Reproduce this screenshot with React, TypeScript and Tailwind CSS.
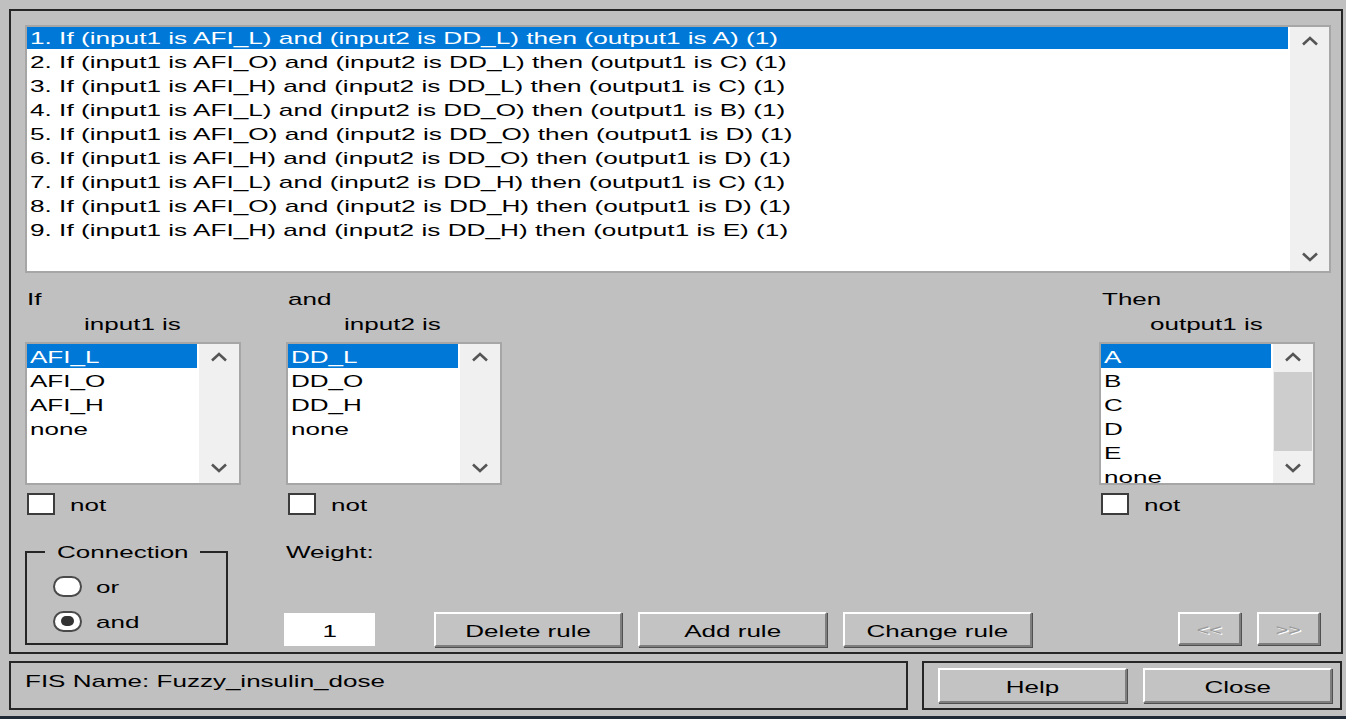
import React from 'react';

const rules = [
  '1. If (input1 is AFI_L) and (input2 is DD_L) then (output1 is A) (1)',
  '2. If (input1 is AFI_O) and (input2 is DD_L) then (output1 is C) (1)',
  '3. If (input1 is AFI_H) and (input2 is DD_L) then (output1 is C) (1)',
  '4. If (input1 is AFI_L) and (input2 is DD_O) then (output1 is B) (1)',
  '5. If (input1 is AFI_O) and (input2 is DD_O) then (output1 is D) (1)',
  '6. If (input1 is AFI_H) and (input2 is DD_O) then (output1 is D) (1)',
  '7. If (input1 is AFI_L) and (input2 is DD_H) then (output1 is C) (1)',
  '8. If (input1 is AFI_O) and (input2 is DD_H) then (output1 is D) (1)',
  '9. If (input1 is AFI_H) and (input2 is DD_H) then (output1 is E) (1)',
];

// wide UI text: the dialog renders its labels stretched horizontally
function T({ children, center = false }: { children: React.ReactNode; center?: boolean }) {
  return (
    <span
      className={
        center
          ? 'inline-block whitespace-nowrap origin-center scale-x-[1.53] translate-y-[2px]'
          : 'inline-block whitespace-nowrap origin-left scale-x-[1.53] translate-y-[2px]'
      }
    >
      {children}
    </span>
  );
}

function Chevron({ up = false }: { up?: boolean }) {
  return (
    <svg width="18" height="10" viewBox="0 0 18 10">
      <path
        d={up ? 'M2 8.5 L9 2 L16 8.5' : 'M2 1.5 L9 8 L16 1.5'}
        fill="none"
        stroke="#555"
        strokeWidth="2.6"
      />
    </svg>
  );
}

function ListBox({ items, thumb = false }: { items: string[]; thumb?: boolean }) {
  return (
    <div className="w-[216px] h-[143px] border-2 border-[#a6a6a6] bg-white flex">
      <div className="w-[170px] overflow-hidden">
        {items.map((it, i) => (
          <div
            key={it}
            className={
              i === 0
                ? 'h-[24px] leading-[24px] pl-[3px] bg-[#0078d7] text-white'
                : 'h-[24px] leading-[24px] pl-[3px]'
            }
          >
            <T>{it}</T>
          </div>
        ))}
      </div>
      <div className="ml-[2px] w-[40px] bg-[#f0f0f0] flex flex-col">
        <div className="h-[26px] flex items-center justify-center">
          <Chevron up />
        </div>
        {thumb && <div className="mt-[2px] mx-[1px] h-[79px] bg-[#cdcdcd]" />}
        <div className="flex-1" />
        <div className="h-[30px] flex items-center justify-center">
          <Chevron />
        </div>
      </div>
    </div>
  );
}

function NotBox() {
  return (
    <div className="mt-[8px] pl-[2px] flex items-center h-[22px]">
      <div className="w-[28px] h-[22px] bg-white border-2 border-[#3c3c3c]" />
      <div className="ml-[15px]">
        <T>not</T>
      </div>
    </div>
  );
}

function Radio({ checked = false, label }: { checked?: boolean; label: string }) {
  return (
    <div className="h-[24px] flex items-center pl-[26px]">
      <div className="w-[29px] h-[21px] rounded-full bg-white border-2 border-[#4a4a4a] flex items-center justify-center">
        {checked && <div className="w-[13px] h-[10px] rounded-full bg-[#333]" />}
      </div>
      <div className="ml-[14px]">
        <T>{label}</T>
      </div>
    </div>
  );
}

function Btn({ label, size, disabled = false }: { label: string; size: string; disabled?: boolean }) {
  return (
    <div
      className={
        size +
        ' border-2 border-t-white border-l-white border-r-[#7e7e7e] border-b-[#7e7e7e] shadow-[1px_1px_0_#505050] bg-[#c3c3c3] flex items-center justify-center'
      }
    >
      {disabled ? (
        <span className="text-[14px] text-[#9a9a9a] [text-shadow:1px_1px_0_#fff]">
          <T center>{label}</T>
        </span>
      ) : (
        <T center>{label}</T>
      )}
    </div>
  );
}

export default function App() {
  return (
    <div className="w-[1346px] h-[719px] overflow-hidden bg-[#c0c0c0] text-[17px] text-black font-['Liberation_Sans',Arial,sans-serif] flex flex-col">
      <div className="pt-[9px] pl-[9px]">
        {/* rule editor panel */}
        <div className="w-[1334px] h-[645px] border-2 border-[#262626]">
          <div className="ml-[14px] mt-[14px] w-[1306px] h-[248px] border-2 border-[#a6a6a6] bg-white flex">
            <div className="w-[1261px] overflow-hidden">
              {rules.map((r, i) => (
                <div key={r} className="h-[24px]">
                  <div
                    className={
                      i === 0
                        ? 'h-[22px] leading-[22px] pl-[3px] bg-[#0078d7] text-white'
                        : 'h-[22px] leading-[22px] pl-[3px]'
                    }
                  >
                    <span className="inline-block whitespace-nowrap origin-left scale-x-[1.54] translate-y-[1px]">
                      {r}
                    </span>
                  </div>
                </div>
              ))}
            </div>
            <div className="ml-[2px] w-[39px] bg-[#f0f0f0] flex flex-col items-center justify-between py-[9px]">
              <Chevron up />
              <Chevron />
            </div>
          </div>

          {/* antecedent / consequent pickers */}
          <div className="mt-[15px] flex">
            <div className="ml-[14px] w-[216px]">
              <div className="h-[20px] leading-[20px] pl-[2px]">
                <T>If</T>
              </div>
              <div className="mt-[5px] h-[20px] leading-[20px] pl-[59px]">
                <T>input1 is</T>
              </div>
              <div className="mt-[9px]">
                <ListBox items={['AFI_L', 'AFI_O', 'AFI_H', 'none']} />
              </div>
              <NotBox />
            </div>
            <div className="ml-[45px] w-[216px]">
              <div className="h-[20px] leading-[20px] pl-[2px]">
                <T>and</T>
              </div>
              <div className="mt-[5px] h-[20px] leading-[20px] pl-[58px]">
                <T>input2 is</T>
              </div>
              <div className="mt-[9px]">
                <ListBox items={['DD_L', 'DD_O', 'DD_H', 'none']} />
              </div>
              <NotBox />
            </div>
            <div className="ml-[597px] w-[216px]">
              <div className="h-[20px] leading-[20px] pl-[3px]">
                <T>Then</T>
              </div>
              <div className="mt-[5px] h-[20px] leading-[20px] pl-[51px]">
                <T>output1 is</T>
              </div>
              <div className="mt-[9px]">
                <ListBox items={['A', 'B', 'C', 'D', 'E', 'none']} thumb />
              </div>
              <NotBox />
            </div>
          </div>

          {/* connection, weight and rule actions */}
          <div className="mt-[26px] flex items-start">
            <div className="ml-[14px] mt-[10px] w-[203px] h-[94px] border-2 border-[#262626]">
              <div className="-mt-[12px] ml-[18px] w-[155px] px-[12px] h-[20px] leading-[20px] bg-[#c0c0c0]">
                <T>Connection</T>
              </div>
              <div className="mt-[13px]">
                <Radio label="or" />
              </div>
              <div className="mt-[11px]">
                <Radio label="and" checked />
              </div>
            </div>
            <div className="ml-[56px] flex flex-col">
              <div className="h-[20px] leading-[20px] pl-[2px]">
                <T>Weight:</T>
              </div>
              <div className="mt-[52px] w-[91px] h-[33px] bg-white flex items-center justify-center">
                <T center>1</T>
              </div>
            </div>
            <div className="ml-[59px] mt-[71px] flex gap-[16px]">
              <Btn label="Delete rule" size="w-[188px] h-[35px]" />
              <Btn label="Add rule" size="w-[189px] h-[35px]" />
              <Btn label="Change rule" size="w-[189px] h-[35px]" />
            </div>
            <div className="ml-[146px] mt-[71px] flex gap-[16px]">
              <Btn label="<<" size="w-[63px] h-[33px]" disabled />
              <Btn label=">>" size="w-[63px] h-[33px]" disabled />
            </div>
          </div>
        </div>
      </div>

      {/* status and dialog buttons */}
      <div className="mt-[7px] pl-[9px] flex">
        <div className="w-[899px] h-[49px] border-2 border-[#262626] pl-[14px] pt-[7px] leading-[20px]">
          <T>FIS Name: Fuzzy_insulin_dose</T>
        </div>
        <div className="ml-[14px] w-[420px] h-[49px] border-2 border-[#262626] pl-[14px] pt-[5px] flex gap-[16px]">
          <Btn label="Help" size="w-[189px] h-[35px]" />
          <Btn label="Close" size="w-[189px] h-[35px]" />
        </div>
      </div>
      <div className="mt-auto h-[3px] bg-[#1f2a36]" />
    </div>
  );
}
